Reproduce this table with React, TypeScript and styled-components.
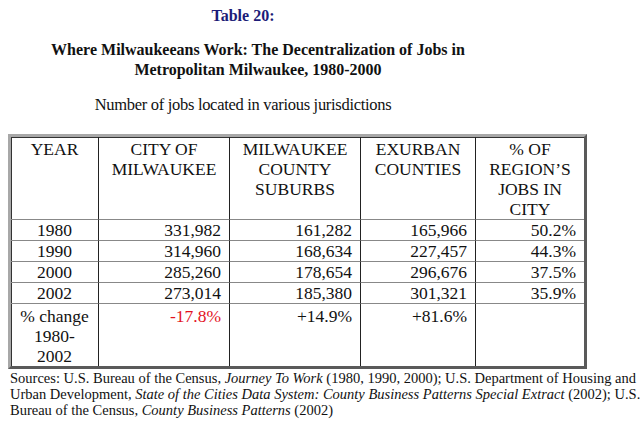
import React from 'react';
import styled, { createGlobalStyle } from 'styled-components';

const GlobalStyle = createGlobalStyle`
  body {
    margin: 0;
    background: #fff;
  }
`;

const Page = styled.div`
  width: 640px;
  height: 428px;
  padding: 6px 0 0 8px;
  box-sizing: border-box;
  overflow: hidden;
  font-family: "Liberation Serif", "Times New Roman", serif;
  color: #111;
`;

const Heading = styled.div`
  width: 500px;
  text-align: center;
  font-weight: bold;
  font-size: 16px;
  line-height: 20px;
`;

const TableLabel = styled.div`
  color: #1c1c78;
  padding-right: 30px;
  margin-bottom: 14px;
`;

const Subtitle = styled.div`
  width: 470px;
  margin-top: 15px;
  text-align: center;
  font-size: 16.5px;
  letter-spacing: -0.3px;
  line-height: 20px;
`;

const Table = styled.table`
  margin-top: 19px;
  width: 579px;
  border-collapse: separate;
  border-spacing: 0;
  border: 3px solid;
  border-color: #a8a8a8 #5a5a5a #5a5a5a #a8a8a8;
  box-shadow: inset 1px 1px 0 #333;
  table-layout: fixed;
  font-family: "Liberation Serif", "Times New Roman", serif;
  font-size: 17.5px;
  line-height: 20px;
  color: #111;
`;

const HeadCell = styled.th<{ $w: number; $first?: boolean }>`
  box-sizing: border-box;
  width: ${({ $w }) => $w}px;
  height: 83px;
  vertical-align: top;
  font-weight: normal;
  text-align: center;
  padding: 2px 1px 0;
  border-left: ${({ $first }) => ($first ? 'none' : '1px solid #222')};
  border-bottom: 1px solid #888;
`;

const Cell = styled.td<{ $align?: 'center' | 'right'; $first?: boolean; $red?: boolean; $last?: boolean }>`
  box-sizing: border-box;
  height: ${({ $last }) => ($last ? 62 : 21)}px;
  padding: ${({ $last }) => ($last ? '2px 8px 0' : '0 8px')};
  vertical-align: top;
  text-align: ${({ $align }) => $align || 'right'};
  color: ${({ $red }) => ($red ? '#e3121e' : 'inherit')};
  border-left: ${({ $first }) => ($first ? 'none' : '1px solid #222')};
  border-bottom: ${({ $last }) => ($last ? 'none' : '1px solid #888')};
`;

const Sources = styled.p`
  margin: 1px 0 0 2px;
  white-space: nowrap;
  font-size: 14.5px;
  line-height: 16px;
`;

const rows = [
  ['1980', '331,982', '161,282', '165,966', '50.2%'],
  ['1990', '314,960', '168,634', '227,457', '44.3%'],
  ['2000', '285,260', '178,654', '296,676', '37.5%'],
  ['2002', '273,014', '185,380', '301,321', '35.9%'],
];

const headers: [string[], number][] = [
  [['YEAR'], 87],
  [['CITY OF', 'MILWAUKEE'], 131],
  [['MILWAUKEE', 'COUNTY', 'SUBURBS'], 131],
  [['EXURBAN', 'COUNTIES'], 115],
  [['% OF', 'REGION\u2019S', 'JOBS IN', 'CITY'], 109],
];

function Lines({ lines }: { lines: string[] }) {
  return (
    <>
      {lines.map((l, j) => (
        <React.Fragment key={l}>
          {j > 0 && <br />}
          {l}
        </React.Fragment>
      ))}
    </>
  );
}

export default function App() {
  return (
    <Page>
      <GlobalStyle />
      <Heading>
        <TableLabel>Table 20:</TableLabel>
        Where Milwaukeeans Work: The Decentralization of Jobs in
        <br />
        Metropolitan Milwaukee, 1980-2000
      </Heading>
      <Subtitle>Number of jobs located in various jurisdictions</Subtitle>

      <Table>
        <thead>
          <tr>
            {headers.map(([lines, w], i) => (
              <HeadCell key={lines[0]} $w={w} $first={i === 0}>
                <Lines lines={lines} />
              </HeadCell>
            ))}
          </tr>
        </thead>
        <tbody>
          {rows.map((r) => (
            <tr key={r[0]}>
              <Cell $align="center" $first>{r[0]}</Cell>
              {r.slice(1).map((v) => (
                <Cell key={v}>{v}</Cell>
              ))}
            </tr>
          ))}
          <tr>
            <Cell $align="center" $first $last>
              <Lines lines={['% change', '1980-', '2002']} />
            </Cell>
            <Cell $red $last>-17.8%</Cell>
            <Cell $last>+14.9%</Cell>
            <Cell $last>+81.6%</Cell>
            <Cell $last></Cell>
          </tr>
        </tbody>
      </Table>

      <Sources>
        Sources: U.S. Bureau of the Census, <i>Journey To Work</i> (1980, 1990, 2000); U.S. Department of Housing and
        <br />
        Urban Development, <i>State of the Cities Data System: County Business Patterns Special Extract</i> (2002); U.S.
        <br />
        Bureau of the Census, <i>County Business Patterns</i> (2002)
      </Sources>
    </Page>
  );
}
